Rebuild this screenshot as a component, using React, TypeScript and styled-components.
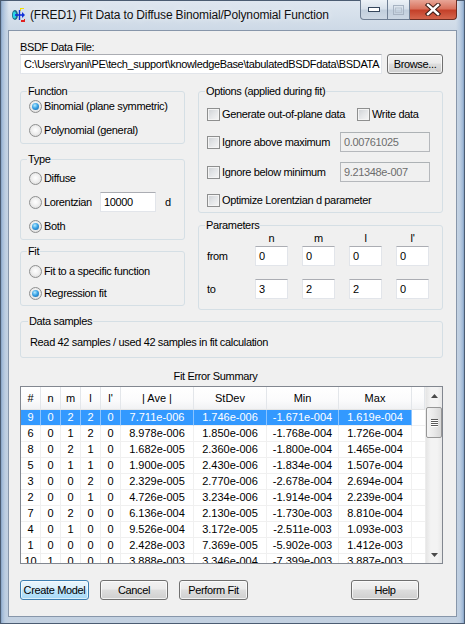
import React from 'react';
import styled, { createGlobalStyle } from 'styled-components';

const GlobalStyle = createGlobalStyle`
  html, body { margin: 0; padding: 0; background: #fff; }
  body {
    font-family: "Liberation Sans", Arial, sans-serif;
    font-size: 11px;
    color: #000;
  }
  * { box-sizing: border-box; }
`;

const Frame = styled.div`
  width: 465px;
  height: 624px;
  display: flex;
  flex-direction: column;
  padding: 0 8px 7px 8px;
  background:
    linear-gradient(90deg, #5f7fa8 0px, #9fb8d6 2px, #bccde1 5px, rgba(210,221,234,0) 9px, rgba(210,221,234,0) calc(100% - 9px), #bccde1 calc(100% - 5px), #9fb8d6 calc(100% - 2px), #5f7fa8 100%),
    linear-gradient(180deg, #dfe7f0 0px, #cdd9e6 30px, #c3d1e1 100%);
  box-shadow: inset 0 0 0 1px #4b5c72;
`;

const TitleBar = styled.div`
  height: 30px;
  display: flex;
  align-items: flex-start;
`;

const TitleIcon = styled.svg`
  margin: 7px 0 0 2px;
  flex: none;
`;

const TitleText = styled.div`
  margin: 8px 0 0 4px;
  font-size: 12px;
  line-height: 14px;
  letter-spacing: -0.15px;
  color: #111;
  text-shadow: 0 0 6px rgba(255,255,255,0.9);
  white-space: nowrap;
`;

const CaptionButtons = styled.div`
  margin-left: auto;
  display: flex;
  height: 20px;
`;

const CapButton = styled.div<{ $w: number; $kind?: 'close' | 'off' }>`
  width: ${p => p.$w}px;
  height: 20px;
  display: flex;
  align-items: center;
  justify-content: center;
  border: 1px solid ${p => (p.$kind === 'close' ? '#6e2d22' : '#6f7f94')};
  border-top: none;
  border-radius: ${p => (p.$kind === 'close' ? '0 0 4px 0' : p.$kind === 'off' ? '0' : '0 0 0 4px')};
  background: ${p =>
    p.$kind === 'close'
      ? 'linear-gradient(180deg, #e8a697 0%, #d9735e 45%, #c4412a 55%, #d5664d 100%)'
      : 'linear-gradient(180deg, #edf2f7 0%, #d8e1eb 45%, #c2cfdd 55%, #cdd8e4 100%)'};
  & + & { border-left: none; }
`;

const Client = styled.div`
  flex: 1;
  display: flex;
  flex-direction: column;
  background: #f0f0f0;
  border: 1px solid #8796aa;
  padding: 10px 13px 0 11px;
  letter-spacing: -0.35px;
`;

const FieldLabel = styled.div`
  line-height: 13px;
`;

const FileRow = styled.div`
  display: flex;
  gap: 5px;
  height: 20px;
`;

const TextBox = styled.div<{ $w?: number; $off?: boolean }>`
  ${p => (p.$w ? `width: ${p.$w}px;` : 'flex: 1;')}
  height: 20px;
  flex-shrink: 0;
  padding: 0 3px;
  line-height: 18px;
  white-space: nowrap;
  overflow: hidden;
  background: ${p => (p.$off ? '#f0f0f0' : '#fff')};
  color: ${p => (p.$off ? '#6d6d6d' : '#000')};
  border: 1px solid ${p => (p.$off ? '#b5b8bc' : '#e2e5ea')};
  border-top-color: ${p => (p.$off ? '#adb2b5' : '#abadb3')};
`;

const Button = styled.div<{ $w: number; $primary?: boolean; $push?: number }>`
  width: ${p => p.$w}px;
  height: 20px;
  flex: none;
  margin-left: ${p => p.$push ?? 0}px;
  display: flex;
  align-items: center;
  justify-content: center;
  border: 1px solid ${p => (p.$primary ? '#3c7fb1' : '#707070')};
  border-radius: 3px;
  background: ${p =>
    p.$primary
      ? 'linear-gradient(180deg, #eaf6fd 0%, #d9f0fc 45%, #bee6fd 50%, #a7d9f5 100%)'
      : 'linear-gradient(180deg, #f2f2f2 0%, #ebebeb 45%, #dddddd 50%, #cfcfcf 100%)'};
  box-shadow: inset 0 0 0 1px ${p => (p.$primary ? 'rgba(255,255,255,0.6)' : 'rgba(255,255,255,0.7)')};
`;

const Columns = styled.div`
  display: flex;
  gap: 13px;
  margin-top: 11px;
`;

const Column = styled.div<{ $w: number }>`
  width: ${p => p.$w}px;
  display: flex;
  flex-direction: column;
`;

const Group = styled.fieldset<{ $pad: string; $gap?: number; $mt?: number }>`
  margin: ${p => p.$mt ?? 0}px 0 0 0;
  min-width: 0;
  padding: ${p => p.$pad};
  border: 1px solid #d5dfe5;
  border-radius: 3px;
  display: flex;
  flex-direction: column;
  gap: ${p => p.$gap ?? 0}px;
`;

const Legend = styled.legend`
  padding: 0 1px;
  margin-left: -2px;
  line-height: 13px;
`;

const Row = styled.div<{ $h?: number; $gap?: number }>`
  display: flex;
  align-items: center;
  height: ${p => p.$h ?? 16}px;
  gap: ${p => p.$gap ?? 2}px;
  white-space: nowrap;
`;

const ItemLabel = styled.span<{ $w?: number }>`
  ${p => (p.$w ? `width: ${p.$w}px; flex: none;` : '')}
`;

const RadioMark = styled.span<{ $on?: boolean }>`
  width: 13px;
  height: 13px;
  flex: none;
  border-radius: 50%;
  border: 1px solid #8e8f8f;
  background: radial-gradient(circle at 50% 45%, #ffffff 0%, #f0f0f0 45%, #d4d4d4 100%);
  display: flex;
  align-items: center;
  justify-content: center;
  &::after {
    content: '';
    width: 7px;
    height: 7px;
    border-radius: 50%;
    display: ${p => (p.$on ? 'block' : 'none')};
    background: radial-gradient(circle at 40% 35%, #b8ecff 0%, #3aa3e6 45%, #135a9a 100%);
  }
`;

const CheckMark = styled.span`
  width: 13px;
  height: 13px;
  flex: none;
  border: 1px solid #8e8f8f;
  background: linear-gradient(135deg, #cdd0d4 0%, #e4e6e8 50%, #f6f6f6 100%);
  box-shadow: inset 0 0 0 1px #f4f4f4;
`;

const ParamGrid = styled.div<{ $h: number; $mt?: number }>`
  display: grid;
  grid-template-columns: 34px repeat(4, 33px);
  column-gap: 14px;
  align-items: center;
  height: ${p => p.$h}px;
  margin-top: ${p => p.$mt ?? 0}px;
`;

const ParamHead = styled.span`
  text-align: center;
  line-height: 12px;
`;

const Caption = styled.div`
  margin-top: 12px;
  line-height: 13px;
  text-align: center;
  padding-right: 32px;
`;

const ListBox = styled.div`
  margin-top: 3px;
  height: 178px;
  display: flex;
  border: 1px solid #828790;
  background: #fff;
`;

const TableArea = styled.div`
  flex: 1;
  overflow: hidden;
`;

const Table = styled.table`
  width: 100%;
  table-layout: fixed;
  border-collapse: separate;
  border-spacing: 0;
  letter-spacing: 0;
`;

const Th = styled.th`
  height: 23px;
  padding: 0;
  font-weight: normal;
  line-height: 22px;
  text-align: center;
  border-right: 1px solid #e3e6ea;
  border-bottom: 1px solid #e5e5e5;
  background: linear-gradient(180deg, #ffffff 0%, #fbfbfc 60%, #f1f2f4 100%);
  white-space: nowrap;
  overflow: hidden;
`;

const Td = styled.td<{ $sel?: boolean }>`
  height: 16px;
  padding: 0;
  line-height: 15px;
  text-align: center;
  white-space: nowrap;
  overflow: hidden;
  border-right: 1px solid ${p => (p.$sel ? '#8cc4ff' : '#f0f0f0')};
  border-bottom: 1px solid #f0f0f0;
  background: ${p => (p.$sel ? '#3399ff' : 'transparent')};
  color: ${p => (p.$sel ? '#fff' : '#000')};
`;

const Filler = styled.td`
  padding: 0;
  border-bottom: 1px solid #f0f0f0;
`;

const ScrollBar = styled.div`
  width: 17px;
  flex: none;
  display: flex;
  flex-direction: column;
  background: linear-gradient(90deg, #e5e5e5 0%, #f3f3f3 30%, #f3f3f3 70%, #e8e8e8 100%);
  border-left: 1px solid #ececec;
`;

const ScrollArrow = styled.div`
  height: 17px;
  display: flex;
  align-items: center;
  justify-content: center;
`;

const Thumb = styled.div`
  margin: 3px 0 0 0;
  height: 31px;
  border: 1px solid #979797;
  border-radius: 2px;
  background: linear-gradient(90deg, #f4f4f4 0%, #e9e9e9 50%, #d8d8d8 100%);
  display: flex;
  flex-direction: column;
  align-items: center;
  justify-content: center;
  gap: 1px;
`;

const Grip = styled.span`
  width: 7px;
  height: 1px;
  background: #5a5a5a;
  box-shadow: 0 1px 0 #fff;
`;

const Spacer = styled.div`
  flex: 1;
`;

const ButtonRow = styled.div`
  display: flex;
  gap: 11px;
  margin-top: 16px;
`;

const cols = [20, 20, 20, 20, 20, 73, 73, 72, 73];
const heads = ['#', 'n', 'm', 'l', "l'", '| Ave |', 'StDev', 'Min', 'Max'];
const rows = [
  ['9', '0', '2', '2', '0', '7.711e-006', '1.746e-006', '-1.671e-004', '1.619e-004'],
  ['6', '0', '1', '2', '0', '8.978e-006', '1.850e-006', '-1.768e-004', '1.726e-004'],
  ['8', '0', '2', '1', '0', '1.682e-005', '2.360e-006', '-1.800e-004', '1.465e-004'],
  ['5', '0', '1', '1', '0', '1.900e-005', '2.430e-006', '-1.834e-004', '1.507e-004'],
  ['3', '0', '0', '2', '0', '2.329e-005', '2.770e-006', '-2.678e-004', '2.694e-004'],
  ['2', '0', '0', '1', '0', '4.726e-005', '3.234e-006', '-1.914e-004', '2.239e-004'],
  ['7', '0', '2', '0', '0', '6.136e-004', '2.130e-005', '-1.730e-003', '8.810e-004'],
  ['4', '0', '1', '0', '0', '9.526e-004', '3.172e-005', '-2.511e-003', '1.093e-003'],
  ['1', '0', '0', '0', '0', '2.428e-003', '7.369e-005', '-5.902e-003', '1.412e-003'],
  ['10', '1', '0', '0', '0', '3.888e-003', '3.346e-004', '-7.399e-003', '3.887e-003'],
];

const Radio = ({ on, children, w }: { on?: boolean; children: React.ReactNode; w?: number }) => (
  <>
    <RadioMark $on={on} />
    <ItemLabel $w={w}>{children}</ItemLabel>
  </>
);

const Check = ({ children, w }: { children: React.ReactNode; w?: number }) => (
  <>
    <CheckMark />
    <ItemLabel $w={w}>{children}</ItemLabel>
  </>
);

const Arrow = ({ up }: { up?: boolean }) => (
  <svg width="7" height="4" viewBox="0 0 7 4">
    <path d={up ? 'M0 4 L3.5 0 L7 4 Z' : 'M0 0 L3.5 4 L7 0 Z'} fill="#4a4a4a" />
  </svg>
);

export default function App() {
  return (
    <Frame>
      <GlobalStyle />
      <TitleBar>
        <TitleIcon width="16" height="16" viewBox="0 0 16 16">
          <path d="M10 1 h4 v1 h-3 v2 h-1 z" fill="#f4e000" />
          <ellipse cx="5" cy="8" rx="3" ry="5" fill="#1d6f8a" />
          <ellipse cx="4.5" cy="8" rx="1.6" ry="3.6" fill="#2ad4e8" />
          <path d="M9.5 3 v10" stroke="#1030d8" strokeWidth="1.4" />
          <path d="M5 8 h8" stroke="#1030d8" strokeWidth="1.6" />
          <path d="M12 5 l3 3 l-3 3 z" fill="#1030d8" />
          <path d="M11 13 h3 v-1 h1 v3 h-4 z" fill="#e02020" />
        </TitleIcon>
        <TitleText>(FRED1) Fit Data to Diffuse Binomial/Polynomial Function</TitleText>
        <CaptionButtons>
          <CapButton $w={28}>
            <svg width="12" height="5" viewBox="0 0 12 5">
              <rect x="0.5" y="0.5" width="11" height="4" fill="#fff" stroke="#35465c" />
            </svg>
          </CapButton>
          <CapButton $w={22} $kind="off">
            <svg width="11" height="10" viewBox="0 0 11 10">
              <rect x="0.5" y="0.5" width="10" height="9" fill="none" stroke="#a7b3c2" />
              <rect x="2.5" y="3" width="6" height="4.5" fill="none" stroke="#b6c1ce" />
            </svg>
          </CapButton>
          <CapButton $w={47} $kind="close">
            <svg width="16" height="13" viewBox="0 0 16 13">
              <path d="M3 2 L13 11 M13 2 L3 11" stroke="#3a1a14" strokeWidth="4.4" strokeLinecap="square" />
              <path d="M3 2 L13 11 M13 2 L3 11" stroke="#fff" strokeWidth="2.4" strokeLinecap="square" />
            </svg>
          </CapButton>
        </CaptionButtons>
      </TitleBar>

      <Client>
        <FieldLabel>BSDF Data File:</FieldLabel>
        <FileRow>
          <TextBox>C:\Users\ryani\PE\tech_support\knowledgeBase\tabulatedBSDFdata\BSDATA</TextBox>
          <Button $w={56}>Browse...</Button>
        </FileRow>

        <Columns>
          <Column $w={165}>
            <Group $pad="0 8px 5px 8px" $gap={8}>
              <Legend>Function</Legend>
              <Row><Radio on>Binomial (plane symmetric)</Radio></Row>
              <Row><Radio>Polynomial (general)</Radio></Row>
            </Group>
            <Group $pad="4px 8px 5px 8px" $gap={6} $mt={9}>
              <Legend>Type</Legend>
              <Row><Radio>Diffuse</Radio></Row>
              <Row $h={20}>
                <Radio w={54}>Lorentzian</Radio>
                <TextBox $w={56}>10000</TextBox>
                <ItemLabel style={{ marginLeft: 7 }}>d</ItemLabel>
              </Row>
              <Row><Radio on>Both</Radio></Row>
            </Group>
            <Group $pad="5px 8px 4px 8px" $gap={6} $mt={5}>
              <Legend>Fit</Legend>
              <Row><Radio>Fit to a specific function</Radio></Row>
              <Row><Radio on>Regression fit</Radio></Row>
            </Group>
          </Column>

          <Column $w={245}>
            <Group $pad="8px 8px 4px 8px" $gap={10}>
              <Legend>Options (applied during fit)</Legend>
              <Row>
                <Check w={133}>Generate out-of-plane data</Check>
                <Check>Write data</Check>
              </Row>
              <Row $h={20}>
                <Check w={116}>Ignore above maximum</Check>
                <TextBox $w={90} $off>0.00761025</TextBox>
              </Row>
              <Row $h={20}>
                <Check w={116}>Ignore below minimum</Check>
                <TextBox $w={90} $off>9.21348e-007</TextBox>
              </Row>
              <Row><Check>Optimize Lorentzian d parameter</Check></Row>
            </Group>
            <Group $pad="0 8px 10px 8px" $mt={6}>
              <Legend>Parameters</Legend>
              <ParamGrid $h={12}>
                <span />
                <ParamHead>n</ParamHead>
                <ParamHead>m</ParamHead>
                <ParamHead>l</ParamHead>
                <ParamHead>l'</ParamHead>
              </ParamGrid>
              <ParamGrid $h={20} $mt={2}>
                <span>from</span>
                <TextBox>0</TextBox>
                <TextBox>0</TextBox>
                <TextBox>0</TextBox>
                <TextBox>0</TextBox>
              </ParamGrid>
              <ParamGrid $h={20} $mt={13}>
                <span>to</span>
                <TextBox>3</TextBox>
                <TextBox>2</TextBox>
                <TextBox>2</TextBox>
                <TextBox>0</TextBox>
              </ParamGrid>
            </Group>
          </Column>
        </Columns>

        <Group $pad="7px 8px 8px 9px" $mt={5}>
          <Legend>Data samples</Legend>
          <Row $h={14}>Read 42 samples / used 42 samples in fit calculation</Row>
        </Group>

        <Caption>Fit Error Summary</Caption>
        <ListBox>
          <TableArea>
            <Table>
              <colgroup>
                {cols.map((w, i) => <col key={i} style={{ width: w }} />)}
                <col />
              </colgroup>
              <thead>
                <tr>
                  {heads.map(h => <Th key={h}>{h}</Th>)}
                  <Th />
                </tr>
              </thead>
              <tbody>
                {rows.map((r, i) => (
                  <tr key={i}>
                    {r.map((c, j) => <Td key={j} $sel={i === 0}>{c}</Td>)}
                    <Filler />
                  </tr>
                ))}
              </tbody>
            </Table>
          </TableArea>
          <ScrollBar>
            <ScrollArrow><Arrow up /></ScrollArrow>
            <Thumb>
              <Grip />
              <Grip />
              <Grip />
              <Grip />
            </Thumb>
            <Spacer />
            <ScrollArrow><Arrow /></ScrollArrow>
          </ScrollBar>
        </ListBox>

        <ButtonRow>
          <Button $w={69} $primary>Create Model</Button>
          <Button $w={68}>Cancel</Button>
          <Button $w={69}>Perform Fit</Button>
          <Button $w={68} $push={92}>Help</Button>
        </ButtonRow>
      </Client>
    </Frame>
  );
}
